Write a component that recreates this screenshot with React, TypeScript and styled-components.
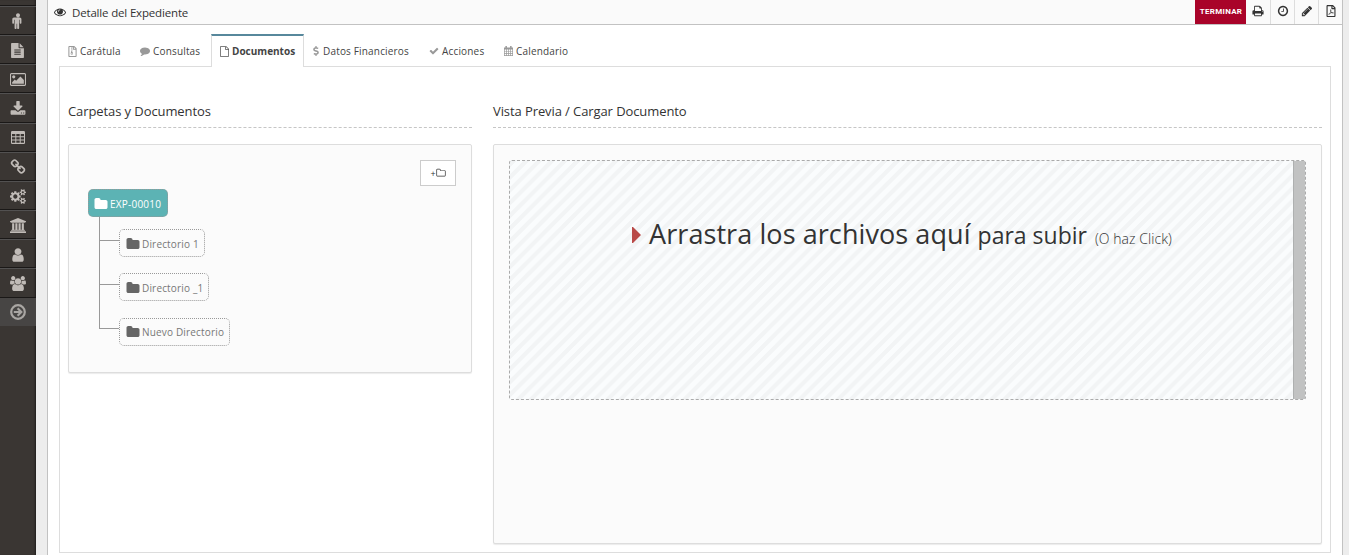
import React from 'react';
import styled, { createGlobalStyle, css } from 'styled-components';
import { FaRegFilePdf, FaRegFileArchive, FaDollarSign } from 'react-icons/fa';

const GlobalStyle = createGlobalStyle`
  * { box-sizing: border-box; }
  html, body { margin: 0; padding: 0; }
  body {
    background: #ededed;
    color: #333;
    font-family: "Open Sans", Arial, sans-serif;
    font-size: 13px;
    overflow: hidden;
  }
  svg { display: block; fill: currentColor; flex: none; }
`;

const smallGear =
  'v140q0 16-149 31-12 27-30 52 51 113 51 138 0 4-4 7-122 71-124 71-8 0-46-47t-52-68q-20 2-30 2t-30-2q-14 21-52 68t-46 47q-2 0-124-71-4-3-4-7 0-25 51-138-18-25-30-52-149-15-149-31v-140q0-16 149-31 13-29 30-52-51-113-51-138 0-4 4-7 4-2 35-20t59-34 30-16q8 0 46 46.5t52 67.5q20-2 30-2t30 2q51-71 92-112l6-2q4 0 124 70 4 3 4 7 0 25-51 138 17 23 30 52 149 15 149 31z';

const paths = {
  male:
    'M1280 704v416q0 40-28 68t-68 28-68-28-28-68v-352h-64v912q0 46-33 79t-79 33-79-33-33-79v-464h-64v464q0 46-33 79t-79 33-79-33-33-79v-912h-64v352q0 40-28 68t-68 28-68-28-28-68v-416q0-80 56-136t136-56h640q80 0 136 56t56 136zm-160-448q0 93-65.5 158.5t-158.5 65.5-158.5-65.5-65.5-158.5 65.5-158.5 158.5-65.5 158.5 65.5 65.5 158.5z',
  fileText:
    'M1596 476q14 14 28 36h-472v-472q22 14 36 28zm-476 164h544v1056q0 40-28 68t-68 28h-1344q-40 0-68-28t-28-68v-1600q0-40 28-68t68-28h800v544q0 40 28 68t68 28zm160 736v-64q0-14-9-23t-23-9h-704q-14 0-23 9t-9 23v64q0 14 9 23t23 9h704q14 0 23-9t9-23zm0-256v-64q0-14-9-23t-23-9h-704q-14 0-23 9t-9 23v64q0 14 9 23t23 9h704q14 0 23-9t9-23zm0-256v-64q0-14-9-23t-23-9h-704q-14 0-23 9t-9 23v64q0 14 9 23t23 9h704q14 0 23-9t9-23z',
  picture:
    'M576 576q0 80-56 136t-136 56-136-56-56-136 56-136 136-56 136 56 56 136zm1024 384v448h-1408v-192l320-320 160 160 512-512zm96-704h-1600q-13 0-22.5 9.5t-9.5 22.5v1216q0 13 9.5 22.5t22.5 9.5h1600q13 0 22.5-9.5t9.5-22.5v-1216q0-13-9.5-22.5t-22.5-9.5zm160 32v1216q0 66-47 113t-113 47h-1600q-66 0-113-47t-47-113v-1216q0-66 47-113t113-47h1600q66 0 113 47t47 113z',
  download:
    'M1344 1344q0-26-19-45t-45-19-45 19-19 45 19 45 45 19 45-19 19-45zm256 0q0-26-19-45t-45-19-45 19-19 45 19 45 45 19 45-19 19-45zm128-224v320q0 40-28 68t-68 28h-1472q-40 0-68-28t-28-68v-320q0-40 28-68t68-28h465l135 136q58 56 136 56t136-56l136-136h464q40 0 68 28t28 68zm-325-569q17 41-14 70l-448 448q-18 19-45 19t-45-19l-448-448q-31-29-14-70 17-39 59-39h256v-448q0-26 19-45t45-19h256q26 0 45 19t19 45v448h256q42 0 59 39z',
  link:
    'M1520 1216q0-40-28-68l-208-208q-28-28-68-28-42 0-72 32 3 3 19 18.5t21.5 21.5 15 19 13 25.5 3.5 27.5q0 40-28 68t-68 28q-15 0-27.5-3.5t-25.5-13-19-15-21.5-21.5-18.5-19q-33 31-33 73 0 40 28 68l206 207q27 27 68 27 40 0 68-26l147-146q28-28 28-67zm-703-705q0-40-28-68l-206-207q-28-28-68-28-39 0-68 27l-147 146q-28 28-28 67 0 40 28 68l208 208q27 27 68 27 42 0 72-31-3-3-19-18.5t-21.5-21.5-15-19-13-25.5-3.5-27.5q0-40 28-68t68-28q15 0 27.5 3.5t25.5 13 19 15 21.5 21.5 18.5 19q33-31 33-73zm895 705q0 120-85 203l-147 146q-83 83-203 83-121 0-204-85l-206-207q-83-83-83-203 0-123 88-209l-88-88q-86 88-208 88-120 0-204-84l-208-208q-84-84-84-204t85-203l147-146q83-83 203-83 121 0 204 85l206 207q83 83 83 203 0 123-88 209l88 88q86-88 208-88 120 0 204 84l208 208q84 84 84 204z',
  cogs:
    'M896 896q0-106-75-181t-181-75-181 75-75 181 75 181 181 75 181-75 75-181zm768 512q0-52-38-90t-90-38-90 38-38 90q0 53 37.5 90.5t90.5 37.5 90.5-37.5 37.5-90.5zm0-1024q0-52-38-90t-90-38-90 38-38 90q0 53 37.5 90.5t90.5 37.5 90.5-37.5 37.5-90.5zm-384 421v185q0 10-7 19.5t-16 10.5l-155 24q-11 35-32 76 34 48 90 115 7 11 7 20 0 12-7 19-23 30-82.5 89.5t-78.5 59.5q-11 0-21-7l-115-90q-37 19-77 31-11 108-23 155-7 24-30 24h-186q-11 0-20-7.5t-10-17.5l-23-153q-34-10-75-31l-118 89q-7 7-20 7-11 0-21-8-144-133-144-160 0-9 7-19 10-14 41-53t47-61q-23-44-35-82l-152-24q-10-1-17-9.5t-7-19.5v-185q0-10 7-19.5t16-10.5l155-24q11-35 32-76-34-48-90-115-7-11-7-20 0-12 7-20 22-30 82-89t79-59q11 0 21 7l115 90q34-18 77-32 11-108 23-154 7-24 30-24h186q11 0 20 7.5t10 17.5l23 153q34 10 75 31l118-89q8-7 20-7 11 0 21 8 144 133 144 160 0 8-7 19-12 16-42 54t-45 60q23 48 34 82l152 23q10 2 17 10.5t7 19.5z' +
    'M1920 1338' + smallGear + 'M1920 314' + smallGear,
  university:
    'M960 0l960 384v128h-128q0 26-20.5 45t-48.5 19h-1526q-28 0-48.5-19t-20.5-45h-128v-128zm-704 640h256v768h128v-768h256v768h128v-768h256v768h128v-768h256v768h59q28 0 48.5 19t20.5 45v64h-1664v-64q0-26 20.5-45t48.5-19h59v-768zm1595 960q28 0 48.5 19t20.5 45v128h-1920v-128q0-26 20.5-45t48.5-19h1782z',
  user:
    'M1536 1399q0 109-62.5 187t-150.5 78h-854q-88 0-150.5-78t-62.5-187q0-85 8.5-160.5t31.5-152 58.5-131 94-89 134.5-34.5q131 128 313 128t313-128q76 0 134.5 34.5t94 89 58.5 131 31.5 152 8.5 160.5zm-256-887q0 159-112.5 271.5t-271.5 112.5-271.5-112.5-112.5-271.5 112.5-271.5 271.5-112.5 271.5 112.5 112.5 271.5z',
  users:
    'M593 896q-162 5-265 128h-134q-82 0-138-40.5t-56-118.5q0-353 124-353 6 0 43.5 21t97.5 42.5 119 21.5q67 0 133-23-5 37-5 66 0 139 81 256zm1071 637q0 120-73 189.5t-194 69.5h-874q-121 0-194-69.5t-73-189.5q0-53 3.5-103.5t14-109 26.5-108.5 43-97.5 62-81 85.5-53.5 111.5-20q10 0 43 21.5t73 48 107 48 135 21.5 135-21.5 107-48 73-48 43-21.5q61 0 111.5 20t85.5 53.5 62 81 43 97.5 26.5 108.5 14 109 3.5 103.5zm-1024-1277q0 106-75 181t-181 75-181-75-75-181 75-181 181-75 181 75 75 181zm704 384q0 159-112.5 271.5t-271.5 112.5-271.5-112.5-112.5-271.5 112.5-271.5 271.5-112.5 271.5 112.5 112.5 271.5zm576 225q0 78-56 118.5t-138 40.5h-134q-103-123-265-128 81-117 81-256 0-29-5-66 66 23 133 23 59 0 119-21.5t97.5-42.5 43.5-21q124 0 124 353zm-128-609q0 106-75 181t-181 75-181-75-75-181 75-181 181-75 181 75 75 181z',
  eye:
    'M1664 960q-152-236-381-353 61 104 61 225 0 185-131.5 316.5t-316.5 131.5-316.5-131.5-131.5-316.5q0-121 61-225-229 117-381 353 133 205 333.5 326.5t434.5 121.5 434.5-121.5 333.5-326.5zm-720-384q0-20-14-34t-34-14q-125 0-214.5 89.5t-89.5 214.5q0 20 14 34t34 14 34-14 14-34q0-86 61-147t147-61q20 0 34-14t14-34zm848 384q0 34-20 69-140 230-376.5 368.5t-499.5 138.5-499.5-139-376.5-368q-20-35-20-69t20-69q140-229 376.5-368t499.5-139 499.5 139 376.5 368q20 35 20 69z',
  comment:
    'M1792 896q0 174-120 321.5t-326 233-450 85.5q-70 0-145-8-198 175-460 242-49 14-114 22-17 2-30.5-9t-17.5-29v-1q-3-4-.5-12t2-10 4.5-9.5l6-9 7-8.5 8-9q7-8 31-34.5t34.5-38 31-39.5 32.5-51 27-59 26-76q-157-89-247.5-220t-90.5-281q0-130 71-248.5t191-204.5 286-136.5 348-50.5q244 0 450 85.5t326 233 120 321.5z',
  file:
    'M1596 380q28 28 48 76t20 88v1152q0 40-28 68t-68 28h-1344q-40 0-68-28t-28-68v-1600q0-40 28-68t68-28h896q40 0 88 20t76 48zm-444-244v376h376q-10-29-22-41l-313-313q-12-12-41-22zm384 1528v-1024h-416q-40 0-68-28t-28-68v-416h-768v1536h1280z',
  check:
    'M1671 566q0 40-28 68l-724 724-136 136q-28 28-68 28t-68-28l-136-136-362-362q-28-28-28-68t28-68l136-136q28-28 68-28t68 28l294 295 656-657q28-28 68-28t68 28l136 136q28 28 28 68z',
  print:
    'M448 1536h896v-256h-896v256zm0-640h896v-384h-160q-40 0-68-28t-28-68v-160h-640v640zm1152 64q0-26-19-45t-45-19-45 19-19 45 19 45 45 19 45-19 19-45zm128 0v416q0 13-9.5 22.5t-22.5 9.5h-224v160q0 40-28 68t-68 28h-960q-40 0-68-28t-28-68v-160h-224q-13 0-22.5-9.5t-9.5-22.5v-416q0-79 56.5-135.5t135.5-56.5h64v-544q0-40 28-68t68-28h672q40 0 88 20t76 48l152 152q28 28 48 76t20 88v256h64q79 0 135.5 56.5t56.5 135.5z',
  clock:
    'M1024 544v448q0 14-9 23t-23 9h-320q-14 0-23-9t-9-23v-64q0-14 9-23t23-9h224v-352q0-14 9-23t23-9h64q14 0 23 9t9 23zm416 352q0-148-73-273t-198-198-273-73-273 73-198 198-73 273 73 273 198 198 273 73 273-73 198-198 73-273zm224 0q0 209-103 385.5t-279.5 279.5-385.5 103-385.5-103-279.5-279.5-103-385.5 103-385.5 279.5-279.5 385.5-103 385.5 103 279.5 279.5 103 385.5z',
  pencil:
    'M491 1536l91-91-235-235-91 91v107h128v128h107zm523-928q0-22-22-22-10 0-17 7l-542 542q-7 7-7 17 0 22 22 22 10 0 17-7l542-542q7-7 7-17zm-54-192l416 416-832 832h-416v-416zm683 96q0 53-37 90l-166 166-416-416 166-165q36-38 90-38 53 0 91 38l235 234q37 39 37 91z',
  folder:
    'M1728 608v704q0 92-66 158t-158 66h-1216q-92 0-158-66t-66-158v-960q0-92 66-158t158-66h320q92 0 158 66t66 158v32h672q92 0 158 66t66 158z',
  folderLine:
    'M1600 1312v-704q0-40-28-68t-68-28h-704q-40 0-68-28t-28-68v-64q0-40-28-68t-68-28h-320q-40 0-68 28t-28 68v960q0 40 28 68t68 28h1216q40 0 68-28t28-68zm128-704v704q0 92-66 158t-158 66h-1216q-92 0-158-66t-66-158v-960q0-92 66-158t158-66h320q92 0 158 66t66 158v32h672q92 0 158 66t66 158z',
};

type GlyphProps = { name: keyof typeof paths; size?: number; width?: number; box?: string };

function Glyph({ name, size = 14, width = size, box = '0 0 1792 1792' }: GlyphProps) {
  return (
    <svg width={width} height={size} viewBox={box}>
      <path d={paths[name]} />
    </svg>
  );
}

function TableGlyph() {
  return (
    <svg width="14" height="13" viewBox="0 0 14 13">
      <path
        fillRule="evenodd"
        d="M1.2 0h11.6q1.2 0 1.2 1.2v10.6q0 1.2-1.2 1.2h-11.6q-1.2 0-1.2-1.2v-10.6q0-1.2 1.2-1.2zM1 3v2.2h3.3v-2.2zM5.3 3v2.2h3.4v-2.2zM9.7 3v2.2h3.3v-2.2zM1 6.2v2.3h3.3v-2.3zM5.3 6.2v2.3h3.4v-2.3zM9.7 6.2v2.3h3.3v-2.3zM1 9.5v2.3h3.3v-2.3zM5.3 9.5v2.3h3.4v-2.3zM9.7 9.5v2.3h3.3v-2.3z"
      />
    </svg>
  );
}

function ArrowCircleGlyph() {
  return (
    <svg width="16" height="16" viewBox="0 0 16 16">
      <circle cx="8" cy="8" r="6.8" fill="none" stroke="currentColor" strokeWidth="2.2" />
      <path d="M3.8 8h7.4M7.6 4.3L11.3 8l-3.7 3.7" fill="none" stroke="currentColor" strokeWidth="2.2" />
    </svg>
  );
}

function CalendarGlyph() {
  return (
    <svg width="9" height="10" viewBox="0 0 9 10">
      <path
        fillRule="evenodd"
        d="M0 1.4h1.4v-1.4h1.5v1.4h3.2v-1.4h1.5v1.4h1.4v8.6h-9zM.7 3.4v1.5h1.4v-1.5zM2.8 3.4v1.5h1.4v-1.5zM4.9 3.4v1.5h1.3v-1.5zM6.9 3.4v1.5h1.4v-1.5zM.7 5.5v1.5h1.4v-1.5zM2.8 5.5v1.5h1.4v-1.5zM4.9 5.5v1.5h1.3v-1.5zM6.9 5.5v1.5h1.4v-1.5zM.7 7.7v1.6h1.4v-1.6zM2.8 7.7v1.6h1.4v-1.6zM4.9 7.7v1.6h1.3v-1.6zM6.9 7.7v1.6h1.4v-1.6z"
      />
    </svg>
  );
}

const Page = styled.div`
  display: flex;
  height: 555px;
  overflow: hidden;
`;

const Sidebar = styled.nav`
  width: 36px;
  flex: none;
  background: #3a3633;
  box-shadow: inset -2px 0 2px -1px rgba(0, 0, 0, 0.45);
  padding-top: 5.8px;
`;

const NavItem = styled.a<{ $active?: boolean }>`
  display: flex;
  align-items: center;
  justify-content: center;
  height: 29.2px;
  padding: 1.4px 1px 0 0;
  border-top: 1px solid #525151;
  border-bottom: 1px solid #1a1817;
  color: #c0bbb7;
  ${(p) =>
    p.$active &&
    css`
      height: 28px;
      background: #474544;
      color: #a9a6a3;
      border-color: #474544;
    `}
`;

const NavCap = styled.div`
  height: 1px;
  margin-top: -1px;
  background: #1a1817;
`;

const Widget = styled.main`
  width: 1296px;
  margin-left: 11px;
  flex: none;
  background: #fff;
  border: solid #c2c2c2;
  border-width: 0 1px;
`;

const WidgetHeader = styled.header`
  display: flex;
  height: 25px;
  background: #fafafa;
  border-bottom: 1px solid #c2c2c2;
`;

const WidgetTitle = styled.h2`
  display: flex;
  align-items: center;
  gap: 6px;
  margin: 0 auto 0 0;
  padding-left: 6px;
  height: 24px;
  font-size: 11.5px;
  font-weight: 400;
  letter-spacing: -0.17px;
  color: #333;
  svg { margin-bottom: 1px; }
`;

const TerminateButton = styled.button`
  width: 51px;
  height: 24px;
  padding: 0 0 1px 1px;
  border: 0;
  background: #a90329;
  color: #fff;
  font: 700 8px Roboto, sans-serif;
  letter-spacing: 0.3px;
`;

const ToolButton = styled.a`
  display: flex;
  align-items: center;
  justify-content: center;
  width: 24px;
  height: 24px;
  padding-bottom: 2px;
  border-left: 1px solid #ddd;
  color: #333;
  &:first-of-type { border-left: 0; }
  &:last-of-type { padding-left: 1px; }
`;

const WidgetBody = styled.div`
  padding: 9px 11px 0;
`;

const Tabs = styled.div`
  display: flex;
  padding: 0 0 0 1px;
  height: 33px;
  margin-bottom: -1px;
  position: relative;
`;

const Tab = styled.a<{ $width: number; $active?: boolean }>`
  display: flex;
  align-items: center;
  gap: 3px;
  width: ${(p) => p.$width}px;
  height: 33px;
  padding: 1px 0 0 8px;
  font-size: 10px;
  letter-spacing: 0.17px;
  color: #444;
  white-space: nowrap;
  svg { color: #999; }
  ${(p) =>
    p.$active &&
    css`
      background: #fff;
      border: solid #ddd;
      border-width: 0 1px;
      border-top: 2px solid #57889c;
      padding: 0 0 1px 8px;
      font-weight: 700;
      letter-spacing: 0;
      svg { color: #555; }
    `}
`;

const ArchiveIcon = styled(FaRegFileArchive)`
  width: 9px;
  height: 11px;
`;

const DollarIcon = styled(FaDollarSign)`
  width: 8px;
  height: 10px;
`;

const TabPane = styled.section`
  display: flex;
  gap: 21px;
  height: 487px;
  padding: 34px 8px 0;
  border: 1px solid #ddd;
`;

const Column = styled.div<{ $width: number }>`
  width: ${(p) => p.$width}px;
  flex: none;
`;

const Legend = styled.h3`
  height: 27px;
  margin: 0 0 16px;
  padding-top: 1px;
  border-bottom: 1px dashed #c6c6c6;
  font-size: 13px;
  line-height: 19px;
  font-weight: 400;
  letter-spacing: -0.09px;
  color: #333;
`;

const Well = styled.div<{ $height: number }>`
  height: ${(p) => p.$height}px;
  padding: 15px;
  background: #fbfbfb;
  border: 1px solid #ddd;
  border-radius: 2px;
  box-shadow: 0 1px 1px #ececec;
`;

const AddFolder = styled.button`
  display: flex;
  align-items: center;
  justify-content: center;
  width: 36px;
  height: 26px;
  margin-left: auto;
  padding: 0;
  background: #fff;
  border: 1px solid #ccc;
  color: #333;
  font: 9px "Open Sans", sans-serif;
`;

const Tree = styled.div`
  padding: 3px 0 0 4px;
`;

const Node = styled.span<{ $root?: boolean }>`
  display: flex;
  align-items: center;
  gap: 2px;
  width: max-content;
  height: 28px;
  padding: 1px 5px 0 6px;
  border: 1px dotted #999;
  border-radius: 5px;
  font-size: 10px;
  letter-spacing: 0.17px;
  color: #777;
  svg { color: #666; }
  ${(p) =>
    p.$root &&
    css`
      background: #5cb3b4;
      color: #fff;
      letter-spacing: 0.22px;
      padding: 1px 6px 0 5px;
      svg { color: #fff; }
    `}
`;

const Branch = styled.div`
  display: flex;
  height: 44.3px;
  padding-left: 11px;
  ${Node} { margin-top: 12px; }
`;

const Connector = styled.div`
  display: flex;
  flex-direction: column;
  width: 20px;
`;

const Elbow = styled.div`
  height: 23.7px;
  flex: none;
  border: solid #999;
  border-width: 0 0 1px 1px;
`;

const Trunk = styled.div`
  flex: 1;
  border-left: 1px solid #999;
`;

const Dropzone = styled.div`
  display: flex;
  height: 240px;
  width: 797px;
  border: 1px dashed #aaa;
  border-radius: 3px;
  background-color: #fafcfd;
  background-image: linear-gradient(
    135deg,
    rgba(0, 0, 0, 0.03) 25%,
    transparent 25%,
    transparent 50%,
    rgba(0, 0, 0, 0.03) 50%,
    rgba(0, 0, 0, 0.03) 75%,
    transparent 75%,
    transparent
  );
  background-size: 12.8px 12.8px;
`;

const DropMessage = styled.div`
  display: flex;
  align-items: baseline;
  flex: 1;
  height: 100px;
  padding: 54px 0 0 122px;
  color: #333;
  white-space: nowrap;
`;

const Caret = styled.svg`
  margin: 0 8px 2px 0;
  align-self: flex-start;
  margin-top: 12px;
  color: #b94a48;
`;

const DropMain = styled.span`
  font-size: 27px;
  letter-spacing: 0.08px;
  margin-right: 7px;
`;

const DropSub = styled.span`
  font-size: 23px;
  margin-right: 8px;
`;

const DropHint = styled.span`
  font-size: 14px;
  font-weight: 300;
  letter-spacing: 0.06px;
`;

const ScrollTrack = styled.div`
  width: 12px;
  background: #c1c2c2;
  border-left: 1px solid #aeb0b0;
`;

const navIcons = [
  <Glyph name="male" size={16} />,
  <Glyph name="fileText" size={15} />,
  <Glyph name="picture" size={15} width={16} box="-64 0 1920 1792" />,
  <Glyph name="download" size={16} />,
  <TableGlyph />,
  <Glyph name="link" size={16} />,
  <Glyph name="cogs" size={15} width={16} box="0 0 1920 1792" />,
  <Glyph name="university" size={15} width={16} box="0 0 1920 1792" />,
  <Glyph name="user" size={16} />,
  <Glyph name="users" size={15} width={16} box="0 0 1920 1792" />,
];

const folders = ['Directorio 1', 'Directorio _1', 'Nuevo Directorio'];

export default function App() {
  return (
    <>
      <GlobalStyle />
      <Page>
        <Sidebar>
          <NavCap />
          {navIcons.map((icon, i) => (
            <NavItem key={i}>{icon}</NavItem>
          ))}
          <NavItem $active>
            <ArrowCircleGlyph />
          </NavItem>
        </Sidebar>
        <Widget>
          <WidgetHeader>
            <WidgetTitle>
              <Glyph name="eye" size={12} />
              Detalle del Expediente
            </WidgetTitle>
            <TerminateButton>TERMINAR</TerminateButton>
            <ToolButton><Glyph name="print" size={12} /></ToolButton>
            <ToolButton><Glyph name="clock" size={12} /></ToolButton>
            <ToolButton><Glyph name="pencil" size={12} /></ToolButton>
            <ToolButton><FaRegFilePdf size={12} /></ToolButton>
          </WidgetHeader>
          <WidgetBody>
            <Tabs>
              <Tab $width={72}><ArchiveIcon />Carátula</Tab>
              <Tab $width={79}><Glyph name="comment" size={10} />Consultas</Tab>
              <Tab $width={93} $active><Glyph name="file" size={11} width={9} box="128 0 1536 1792" />Documentos</Tab>
              <Tab $width={117}><DollarIcon />Datos Financieros</Tab>
              <Tab $width={75}><Glyph name="check" size={10} />Acciones</Tab>
              <Tab $width={90}><CalendarGlyph />Calendario</Tab>
            </Tabs>
            <TabPane>
              <Column $width={404}>
                <Legend>Carpetas y Documentos</Legend>
                <Well $height={229}>
                  <AddFolder>+<Glyph name="folderLine" size={10} /></AddFolder>
                  <Tree>
                    <Node $root><Glyph name="folder" size={14} />EXP-00010</Node>
                    {folders.map((name, i) => (
                      <Branch key={name}>
                        <Connector>
                          <Elbow />
                          {i < folders.length - 1 && <Trunk />}
                        </Connector>
                        <Node><Glyph name="folder" size={14} />{name}</Node>
                      </Branch>
                    ))}
                  </Tree>
                </Well>
              </Column>
              <Column $width={829}>
                <Legend>Vista Previa / Cargar Documento</Legend>
                <Well $height={400}>
                  <Dropzone>
                    <DropMessage>
                      <Caret width="9" height="16" viewBox="0 0 9 16"><path d="M0 0h1l8 8-8 8h-1z" /></Caret>
                      <DropMain>Arrastra los archivos aquí</DropMain>
                      <DropSub>para subir</DropSub>
                      <DropHint>(O haz Click)</DropHint>
                    </DropMessage>
                    <ScrollTrack />
                  </Dropzone>
                </Well>
              </Column>
            </TabPane>
          </WidgetBody>
        </Widget>
      </Page>
    </>
  );
}
